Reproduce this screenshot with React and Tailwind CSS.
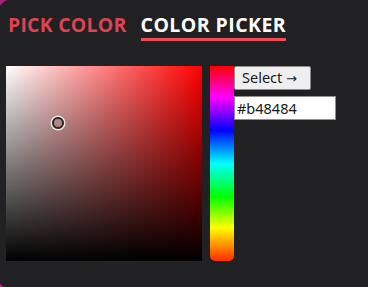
import { useState } from 'react'

const hue = 'linear-gradient(to bottom, #ff0000 0%, #ff00ff 16%, #0000ff 33%, #00ffff 50%, #00ff00 67%, #ffff00 83%, #ff2a00 100%)'

function App() {
  const [hex, setHex] = useState('#b48484')

  return (
    <div className="relative w-[368px] h-[287px] overflow-hidden bg-[#a8207a]" style={{ fontFamily: '"Open Sans", "Liberation Sans", sans-serif' }}>
      <div className="absolute -left-[3px] -top-[1px] w-[400px] h-[291px] rounded-[16px] bg-[#212123]">
        <div className="pl-[11px] pt-[13px]">
          {/* Tabs */}
          <div className="flex items-start gap-[14px] h-[54px]">
            <span className="text-[19.5px] leading-[26px] font-bold text-[#dd4352] tracking-[0.2px]">PICK COLOR</span>
            <div className="flex flex-col">
              <span className="text-[19.5px] leading-[26px] font-bold text-white tracking-[0.45px]">COLOR PICKER</span>
              <div className="h-[3px] bg-[#ee4b5c]" />
            </div>
          </div>

          {/* Picker */}
          <div className="flex -ml-[2px]">
            <div
              className="relative w-[196px] h-[195px]"
              style={{ background: 'linear-gradient(to bottom, transparent, #000), linear-gradient(to right, #fff, #ff0000)' }}
            >
              <div className="absolute left-[46px] top-[51px] w-[12px] h-[12px] rounded-full border-[2px] border-[#2b2b2b] ring-[1.5px] ring-[#e8e8e8]" />
            </div>
            <div className="ml-[8px] w-[24px] h-[195px] rounded-b-[5px]" style={{ background: hue }} />
            <div className="flex flex-col gap-[6px]">
              <button className="w-[77px] h-[24px] bg-[#efefef] border border-[#8f8f8f] rounded-[2px] text-left pl-[7px] text-[14.5px] leading-[20px] text-[#1a1a1a]" style={{ fontFamily: '"Noto Sans", "Open Sans", sans-serif' }}>
                Select <span style={{ fontFamily: '"DejaVu Sans", sans-serif' }} className="text-[13px]">→</span>
              </button>
              <input
                value={hex}
                onChange={(e) => setHex(e.target.value)}
                className="w-[102px] h-[24px] bg-white border border-[#8f8f8f] px-[2px] text-[14.5px] text-[#1a1a1a] outline-none"
                style={{ fontFamily: '"Noto Sans", "Open Sans", sans-serif' }}
              />
            </div>
          </div>
        </div>
      </div>
    </div>
  )
}

export default App
